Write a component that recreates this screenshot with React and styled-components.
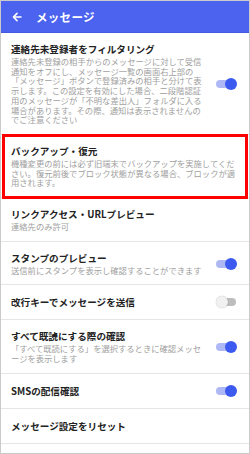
import React from "react";
import styled, { createGlobalStyle } from "styled-components";

const GlobalStyle = createGlobalStyle`
  html, body {
    margin: 0;
    padding: 0;
    background: #fff;
  }
  body {
    font-family: "Noto Sans CJK JP", "Noto Sans", sans-serif;
  }
`;

const Screen = styled.div`
  width: 250px;
  height: 454px;
  box-sizing: border-box;
  border: 1px solid #cacaca;
  background: #fff;
  overflow: hidden;
  display: flex;
  flex-direction: column;
`;

const Header = styled.header`
  height: 31px;
  flex-shrink: 0;
  background: #4b63ef;
  border-bottom: 1px solid #4459df;
  display: flex;
  align-items: center;
  padding-left: 11px;
  gap: 14px;
  color: #fff;
`;

const HeaderTitle = styled.h1`
  margin: 0;
  font-size: 11.5px;
  font-weight: 700;
  letter-spacing: 0.3px;
`;

const List = styled.div`
  display: flex;
  flex-direction: column;
`;

const Row = styled.div`
  position: relative;
  display: flex;
  align-items: center;
  gap: 8px;
  padding: ${(p) => (p.$single ? "11px" : "10px")} 12px
    ${(p) => (p.$single ? "11px" : "9px")} 10px;
  border-bottom: 1px solid #e6e6e6;

  &::after {
    content: "";
    display: ${(p) => (p.$highlight ? "block" : "none")};
    position: absolute;
    top: -1px;
    bottom: -2px;
    left: 1px;
    right: 1px;
    border: 3px solid #ff0000;
    pointer-events: none;
  }
`;

const Texts = styled.div`
  flex: 1;
  min-width: 0;
  max-width: ${(p) => (p.$withToggle ? "194px" : "none")};
`;

const Title = styled.div`
  font-size: 9.6px;
  line-height: 12px;
  font-weight: 700;
  color: #222;
`;

const Desc = styled.div`
  margin-top: 2px;
  font-size: 8.3px;
  line-height: 9.7px;
  color: #a0a0a0;
`;

const ToggleWrap = styled.div`
  margin-left: auto;
  position: relative;
  width: 21px;
  height: 12px;
  flex-shrink: 0;
`;

const Track = styled.div`
  position: absolute;
  top: 2px;
  left: ${(p) => (p.$on ? "0" : "4px")};
  width: 16px;
  height: 8px;
  border-radius: 4px;
  background: ${(p) => (p.$on ? "#adb8f5" : "#bdbdbd")};
`;

const Thumb = styled.div`
  position: absolute;
  top: 0;
  left: ${(p) => (p.$on ? "9px" : "0")};
  width: 12px;
  height: 12px;
  border-radius: 50%;
  background: ${(p) => (p.$on ? "#3d5af0" : "#f1f1f1")};
  box-shadow: ${(p) => (p.$on ? "none" : "0 0 1px rgba(0,0,0,0.35)")};
`;

function Toggle({ on }) {
  return (
    <ToggleWrap>
      <Track $on={on} />
      <Thumb $on={on} />
    </ToggleWrap>
  );
}

const BackArrow = () => (
  <svg width="10" height="10" viewBox="0 0 10 10" fill="none">
    <path
      d="M9 5H1.6M5 1.4L1.4 5L5 8.6"
      stroke="#fff"
      strokeWidth="1.6"
      strokeLinecap="round"
      strokeLinejoin="round"
    />
  </svg>
);

const items = [
  {
    title: "連絡先未登録者をフィルタリング",
    desc: "連絡先未登録の相手からのメッセージに対して受信通知をオフにし、メッセージ一覧の画面右上部の「メッセージ」ボタンで登録済みの相手と分けて表示します。この設定を有効にした場合、二段階認証用のメッセージが「不明な差出人」フォルダに入る場合があります。その際、通知は表示されませんのでご注意ください",
    toggle: true,
  },
  {
    title: "バックアップ・復元",
    desc: "機種変更の前には必ず旧端末でバックアップを実施してください。復元前後でブロック状態が異なる場合、ブロックが適用されます。",
    highlight: true,
  },
  { title: "リンクアクセス・URLプレビュー", desc: "連絡先のみ許可" },
  {
    title: "スタンプのプレビュー",
    desc: "送信前にスタンプを表示し確認することができます",
    toggle: true,
  },
  { title: "改行キーでメッセージを送信", toggle: false },
  {
    title: "すべて既読にする際の確認",
    desc: "「すべて既読にする」を選択するときに確認メッセージを表示します",
    toggle: true,
  },
  { title: "SMSの配信確認", toggle: true },
  { title: "メッセージ設定をリセット" },
];

export default function App() {
  return (
    <>
      <GlobalStyle />
      <Screen>
        <Header>
          <BackArrow />
          <HeaderTitle>メッセージ</HeaderTitle>
        </Header>
        <List>
          {items.map((it) => {
            const hasToggle = it.toggle !== undefined;
            return (
              <Row key={it.title} $single={!it.desc} $highlight={it.highlight}>
                <Texts $withToggle={hasToggle}>
                  <Title>{it.title}</Title>
                  {it.desc && <Desc>{it.desc}</Desc>}
                </Texts>
                {hasToggle && <Toggle on={it.toggle} />}
              </Row>
            );
          })}
        </List>
      </Screen>
    </>
  );
}
